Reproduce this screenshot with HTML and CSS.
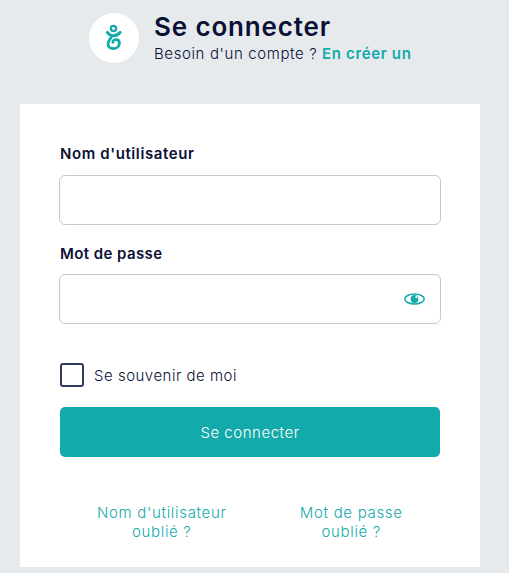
FILE: index.html
```html
<!DOCTYPE html>
<html lang="fr">
<head>
<meta charset="utf-8">
<title>Se connecter</title>
<link rel="stylesheet" href="styles.css">
</head>
<body>
<header class="header">
  <div class="logo">
    <svg width="50" height="50" viewBox="0 0 50 50" fill="none" stroke="#13aaab" stroke-linecap="round" stroke-linejoin="round">
      <circle cx="24.5" cy="15.5" r="2.6" stroke-width="2.3"/>
      <path d="M18.3 19.3C20.2 21.8 22.2 22.7 24.6 22.7C27.1 22.7 29.2 21.7 31.2 19.3" stroke-width="2.9"/>
      <path d="M22.6 23.2C22 25.8 19 27.4 19 31C19 34 21.4 35.6 24.2 35.6C27.8 35.6 30.4 33.2 30.4 30C30.4 27.8 28.8 26.7 27.2 26.7C25.4 26.7 23.8 27.8 23.8 29.4" stroke-width="2.8"/>
    </svg>
  </div>
  <div class="heading">
    <h1 class="title">Se connecter</h1>
    <p class="subtitle">Besoin d'un compte ? <a class="signup" href="#">En créer un</a></p>
  </div>
</header>
<main class="card">
  <form>
    <label class="label" for="user">Nom d'utilisateur</label>
    <div class="field"><input class="input" id="user" type="text"></div>
    <label class="label label-password" for="pass">Mot de passe</label>
    <div class="field">
      <input class="input" id="pass" type="password">
      <svg class="eye" width="22" height="14" viewBox="0 0 22 14">
        <ellipse cx="10.5" cy="7" rx="9.7" ry="4.9" fill="none" stroke="#13aaab" stroke-width="1.5"/>
        <circle cx="10.5" cy="7" r="3.9" fill="#13aaab"/>
        <circle cx="12.4" cy="5.2" r="1.1" fill="#fff"/>
      </svg>
    </div>
    <label class="remember"><input class="checkbox" type="checkbox"><span>Se souvenir de moi</span></label>
    <button class="submit" type="button">Se connecter</button>
    <div class="links">
      <a class="link" href="#">Nom d'utilisateur<br>oublié ?</a>
      <a class="link" href="#">Mot de passe<br>oublié ?</a>
    </div>
  </form>
</main>
</body>
</html>
```
FILE: styles.css
```css
* { box-sizing: border-box; }
body {
  margin: 0;
  min-height: 573px;
  overflow: hidden;
  background: #e6eaed;
  color: #0b1035;
  font-family: Inter, "Open Sans", sans-serif;
  font-size: 15px;
}
a { color: #13aaab; text-decoration: none; }
.header { display: flex; height: 104px; padding: 13px 0 0 89px; }
.logo { width: 50px; height: 50px; border-radius: 50%; background: #fff; }
.logo svg { display: block; }
.heading { margin-left: 15px; white-space: nowrap; }
.title { margin: -2px 0 0; font-size: 26px; line-height: 32px; font-weight: 600; letter-spacing: 0.85px; }
.subtitle { margin: 1px 0 0; line-height: 19px; font-weight: 350; letter-spacing: 0.61px; }
.signup { font-weight: 600; letter-spacing: 0.65px; }
.card { width: 460px; height: 463px; margin-left: 20px; padding: 40px 39px 0; background: #fff; }
.label { display: block; margin-left: 1px; height: 31px; line-height: 19px; font-weight: 600; letter-spacing: 0.6px; }
.label-password { margin-top: 19px; height: 30px; letter-spacing: 0.42px; }
.field { position: relative; height: 50px; }
.input { display: block; width: 100%; height: 50px; padding: 0 14px; border: 1px solid #c8c8c8; border-radius: 6px; background: #fff; font: inherit; }
.eye { position: absolute; right: 15px; top: 18px; }
.remember { display: flex; align-items: center; gap: 10px; height: 24px; margin: 39px 0 0 1px; font-weight: 350; letter-spacing: 0.5px; }
.checkbox { appearance: none; width: 24px; height: 24px; margin: 0; border: 2px solid #343a5b; border-radius: 3px; background: #fff; }
.submit { display: block; width: 380px; height: 50px; margin: 20px 0 0 1px; padding: 0; border: 0; border-radius: 5px; background: #13aaab; color: #fff; font: inherit; font-weight: 350; letter-spacing: 0.53px; }
.links { display: grid; grid-template-columns: 1fr 1fr; margin: 46px -5px 0 1px; padding: 0 0 0 7px; text-align: center; line-height: 19px; font-weight: 350; letter-spacing: 0.68px; }
```
